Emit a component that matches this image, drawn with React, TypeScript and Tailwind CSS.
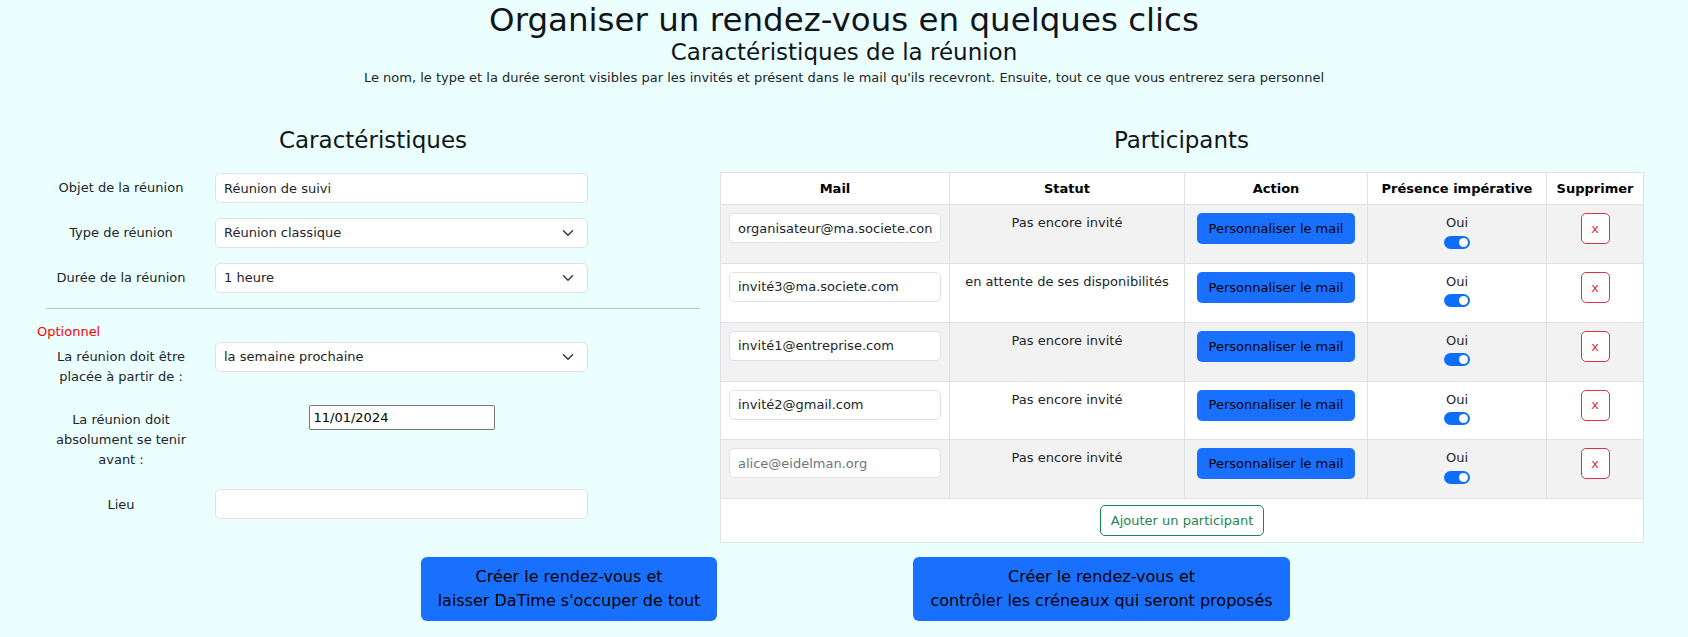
import React from 'react';

const participants = [
  { mail: 'organisateur@ma.societe.con', statut: 'Pas encore invité', placeholder: false },
  { mail: 'invité3@ma.societe.com', statut: 'en attente de ses disponibilités', placeholder: false },
  { mail: 'invité1@entreprise.com', statut: 'Pas encore invité', placeholder: false },
  { mail: 'invité2@gmail.com', statut: 'Pas encore invité', placeholder: false },
  { mail: 'alice@eidelman.org', statut: 'Pas encore invité', placeholder: true },
];

const Chevron = () => (
  <svg
    className="pointer-events-none absolute right-[12px] top-[9px] h-[12px] w-[16px]"
    viewBox="0 0 16 16"
    fill="none"
    stroke="#343a40"
    strokeWidth={2}
    strokeLinecap="round"
    strokeLinejoin="round"
  >
    <path d="m2 5 6 6 6-6" />
  </svg>
);

const SelectBox = ({ value }: { value: string }) => (
  <div className="relative w-[373px]">
    <select
      defaultValue={value}
      className="h-[30px] w-full appearance-none rounded-[5px] border border-[#dee2e6] bg-white pl-2 pr-8 text-[13px] text-[#212529] outline-none"
    >
      <option>{value}</option>
    </select>
    <Chevron />
  </div>
);

const TextBox = ({ value }: { value: string }) => (
  <input
    defaultValue={value}
    className="h-[30px] w-[373px] rounded-[5px] border border-[#dee2e6] bg-white px-2 text-[13px] text-[#212529] outline-none"
  />
);

const Switch = () => (
  <span className="mt-[3px] inline-flex h-[13px] w-[26px] items-center justify-end rounded-full bg-[#0d6efd] pr-[2px]">
    <span className="h-[9px] w-[9px] rounded-full bg-white" />
  </span>
);

export default function App() {
  return (
    <div className="min-h-screen bg-[#ebffff] text-[#212529]" style={{ fontFamily: '"DejaVu Sans", sans-serif' }}>
      {/* En-tête */}
      <div className="pt-[1px] text-center">
        <h2 className="text-[32.5px] leading-[38px] text-[#111418]">Organiser un rendez-vous en quelques clics</h2>
        <h4 className="text-[23px] leading-[1.2] text-[#111418]">Caractéristiques de la réunion</h4>
        <p className="text-[13px] leading-[21px]">
          Le nom, le type et la durée seront visibles par les invités et présent dans le mail qu'ils recevront. Ensuite, tout ce que vous entrerez sera personnel
        </p>
      </div>

      <div className="mt-[39px] flex">
        {/* Colonne gauche */}
        <div className="w-[700px] pl-[46px]">
          <h4 className="text-center text-[23px] leading-[1.2] text-[#111418]">Caractéristiques</h4>

          <div className="mt-[19px] flex items-start gap-[19px]">
            <label className="w-[150px] pt-[5px] text-center text-[13px] leading-[20px]">Objet de la réunion</label>
            <TextBox value="Réunion de suivi" />
          </div>
          <div className="mt-[15px] flex items-start gap-[19px]">
            <label className="w-[150px] pt-[5px] text-center text-[13px] leading-[20px]">Type de réunion</label>
            <SelectBox value="Réunion classique" />
          </div>
          <div className="mt-[15px] flex items-start gap-[19px]">
            <label className="w-[150px] pt-[5px] text-center text-[13px] leading-[20px]">Durée de la réunion</label>
            <SelectBox value="1 heure" />
          </div>

          <hr className="mt-[15px] border-t border-[#b7c5c6]" />

          <p className="-ml-[9px] mt-[13px] text-[13px] leading-[19.5px] text-[#ff0000]">Optionnel</p>

          <div className="flex items-start gap-[19px]">
            <label className="w-[150px] pt-[5px] text-center text-[13px] leading-[20px]">
              La réunion doit être placée à partir de :
            </label>
            <SelectBox value="la semaine prochaine" />
          </div>

          <div className="mt-[18px] flex items-start gap-[19px]">
            <label className="w-[150px] pt-[5px] text-center text-[13px] leading-[20px]">
              La réunion doit absolument se tenir avant :
            </label>
            <div className="flex w-[373px] justify-center">
              <input
                defaultValue="11/01/2024"
                className="h-[25px] w-[186px] rounded-[2px] border border-[#767676] bg-white px-[4px] text-[13px] text-black outline-none"
              />
            </div>
          </div>

          <div className="mt-[19px] flex items-start gap-[19px]">
            <label className="w-[150px] pt-[6px] text-center text-[13px] leading-[20px]">Lieu</label>
            <TextBox value="" />
          </div>
        </div>

        {/* Colonne droite */}
        <div className="pl-[20px]">
          <h4 className="w-[923px] text-center text-[23px] leading-[1.2] text-[#111418]">Participants</h4>

          <table className="mt-[18px] w-[923px] table-fixed border-collapse border border-[#dee2e6] bg-white text-[13px]">
            <colgroup>
              <col className="w-[229px]" />
              <col className="w-[235px]" />
              <col className="w-[183px]" />
              <col className="w-[179px]" />
              <col className="w-[97px]" />
            </colgroup>
            <thead>
              <tr className="h-[32px]">
                {['Mail', 'Statut', 'Action', 'Présence impérative', 'Supprimer'].map((h) => (
                  <th key={h} className="border border-[#dee2e6] px-1 text-center align-middle font-bold text-black">
                    {h}
                  </th>
                ))}
              </tr>
            </thead>
            <tbody>
              {participants.map((p, i) => (
                <tr key={p.mail} className={`h-[58.8px] ${i % 2 === 0 ? 'bg-[#f2f2f2]' : 'bg-white'}`}>
                  <td className="border border-[#dee2e6] p-2 align-top">
                    {p.placeholder ? (
                      <input
                        placeholder={p.mail}
                        className="h-[30px] w-full rounded-[5px] border border-[#dee2e6] bg-white px-2 text-[13px] outline-none placeholder:text-[#6c757d]"
                      />
                    ) : (
                      <input
                        defaultValue={p.mail}
                        className="h-[30px] w-full rounded-[5px] border border-[#dee2e6] bg-white px-2 text-[13px] text-[#212529] outline-none"
                      />
                    )}
                  </td>
                  <td className="border border-[#dee2e6] p-2 text-center align-top leading-[19.5px]">{p.statut}</td>
                  <td className="border border-[#dee2e6] p-2 text-center align-top">
                    <button className="h-[31px] w-[158px] rounded-[5px] bg-[#1a70fe] text-[13px] text-black">
                      Personnaliser le mail
                    </button>
                  </td>
                  <td className="border border-[#dee2e6] p-2 text-center align-top">
                    <div className="leading-[19.5px]">Oui</div>
                    <Switch />
                  </td>
                  <td className="border border-[#dee2e6] p-2 text-center align-top">
                    <button className="h-[31px] w-[29px] rounded-[5px] border border-[#dc3545] bg-white text-[13px] text-[#dc3545]">
                      x
                    </button>
                  </td>
                </tr>
              ))}
              <tr className="bg-white">
                <td colSpan={5} className="border border-[#dee2e6] pb-[6px] pt-[6px] text-center">
                  <button className="h-[31px] rounded-[5px] border border-[#198754] bg-white px-[10px] text-[13px] text-[#198754]">
                    Ajouter un participant
                  </button>
                </td>
              </tr>
            </tbody>
          </table>
        </div>
      </div>

      {/* Boutons de création */}
      <div className="mt-[14px] flex justify-center gap-[196px] pb-4 pl-[23px]">
        <button className="h-[64px] w-[296px] rounded-[6px] bg-[#1a70fe] text-[16px] leading-[24px] text-black">
          Créer le rendez-vous et
          <br />
          laisser DaTime s'occuper de tout
        </button>
        <button className="h-[64px] w-[377px] rounded-[6px] bg-[#1a70fe] text-[16px] leading-[24px] text-black">
          Créer le rendez-vous et
          <br />
          contrôler les créneaux qui seront proposés
        </button>
      </div>
    </div>
  );
}
